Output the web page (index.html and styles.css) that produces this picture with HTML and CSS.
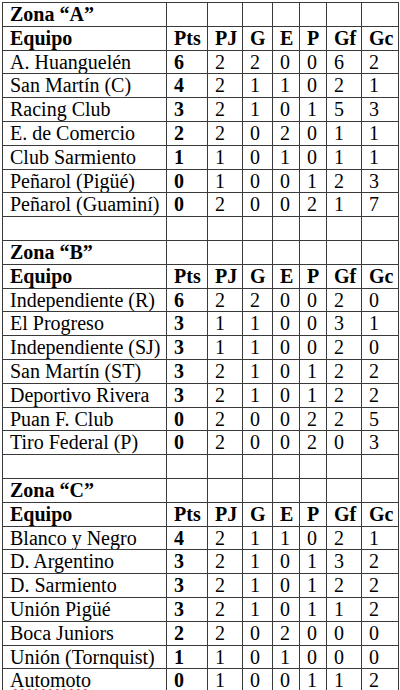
FILE: index.html
```html
<!DOCTYPE html>
<html lang="es">
<head>
<meta charset="utf-8">
<title>Zonas</title>
<link rel="stylesheet" href="styles.css">
</head>
<body>
<table class="tabla">
<colgroup>
<col class="c-eq"><col class="c-pts"><col class="c-pj"><col class="c-g"><col class="c-e"><col class="c-p"><col class="c-gf"><col class="c-gc">
</colgroup>
<tbody>
<tr class="zona"><td>Zona “A”</td><td></td><td></td><td></td><td></td><td></td><td></td><td></td></tr>
<tr class="head"><td>Equipo</td><td>Pts</td><td>PJ</td><td>G</td><td>E</td><td>P</td><td>Gf</td><td>Gc</td></tr>
<tr><td>A. Huanguelén</td><td class="b">6</td><td>2</td><td>2</td><td>0</td><td>0</td><td>6</td><td>2</td></tr>
<tr><td>San Martín (C)</td><td class="b">4</td><td>2</td><td>1</td><td>1</td><td>0</td><td>2</td><td>1</td></tr>
<tr><td>Racing Club</td><td class="b">3</td><td>2</td><td>1</td><td>0</td><td>1</td><td>5</td><td>3</td></tr>
<tr><td>E. de Comercio</td><td class="b">2</td><td>2</td><td>0</td><td>2</td><td>0</td><td>1</td><td>1</td></tr>
<tr><td>Club Sarmiento</td><td class="b">1</td><td>1</td><td>0</td><td>1</td><td>0</td><td>1</td><td>1</td></tr>
<tr><td>Peñarol (Pigüé)</td><td class="b">0</td><td>1</td><td>0</td><td>0</td><td>1</td><td>2</td><td>3</td></tr>
<tr><td>Peñarol (Guaminí)</td><td class="b">0</td><td>2</td><td>0</td><td>0</td><td>2</td><td>1</td><td>7</td></tr>
<tr class="blank"><td></td><td></td><td></td><td></td><td></td><td></td><td></td><td></td></tr>
<tr class="zona"><td>Zona “B”</td><td></td><td></td><td></td><td></td><td></td><td></td><td></td></tr>
<tr class="head"><td>Equipo</td><td>Pts</td><td>PJ</td><td>G</td><td>E</td><td>P</td><td>Gf</td><td>Gc</td></tr>
<tr><td>Independiente (R)</td><td class="b">6</td><td>2</td><td>2</td><td>0</td><td>0</td><td>2</td><td>0</td></tr>
<tr><td>El Progreso</td><td class="b">3</td><td>1</td><td>1</td><td>0</td><td>0</td><td>3</td><td>1</td></tr>
<tr><td>Independiente (SJ)</td><td class="b">3</td><td>1</td><td>1</td><td>0</td><td>0</td><td>2</td><td>0</td></tr>
<tr><td>San Martín (ST)</td><td class="b">3</td><td>2</td><td>1</td><td>0</td><td>1</td><td>2</td><td>2</td></tr>
<tr><td>Deportivo Rivera</td><td class="b">3</td><td>2</td><td>1</td><td>0</td><td>1</td><td>2</td><td>2</td></tr>
<tr><td>Puan F. Club</td><td class="b">0</td><td>2</td><td>0</td><td>0</td><td>2</td><td>2</td><td>5</td></tr>
<tr><td>Tiro Federal (P)</td><td class="b">0</td><td>2</td><td>0</td><td>0</td><td>2</td><td>0</td><td>3</td></tr>
<tr class="blank"><td></td><td></td><td></td><td></td><td></td><td></td><td></td><td></td></tr>
<tr class="zona"><td>Zona “C”</td><td></td><td></td><td></td><td></td><td></td><td></td><td></td></tr>
<tr class="head"><td>Equipo</td><td>Pts</td><td>PJ</td><td>G</td><td>E</td><td>P</td><td>Gf</td><td>Gc</td></tr>
<tr><td>Blanco y Negro</td><td class="b">4</td><td>2</td><td>1</td><td>1</td><td>0</td><td>2</td><td>1</td></tr>
<tr><td>D. Argentino</td><td class="b">3</td><td>2</td><td>1</td><td>0</td><td>1</td><td>3</td><td>2</td></tr>
<tr><td>D. Sarmiento</td><td class="b">3</td><td>2</td><td>1</td><td>0</td><td>1</td><td>2</td><td>2</td></tr>
<tr><td>Unión Pigüé</td><td class="b">3</td><td>2</td><td>1</td><td>0</td><td>1</td><td>1</td><td>2</td></tr>
<tr><td>Boca Juniors</td><td class="b">2</td><td>2</td><td>0</td><td>2</td><td>0</td><td>0</td><td>0</td></tr>
<tr><td>Unión (Tornquist)</td><td class="b">1</td><td>1</td><td>0</td><td>1</td><td>0</td><td>0</td><td>0</td></tr>
<tr><td><span class="spell">Automoto</span></td><td class="b">0</td><td>1</td><td>0</td><td>0</td><td>1</td><td>1</td><td>2</td></tr>
</tbody>
</table>
</body>
</html>
```
FILE: styles.css
```css
html, body {
  margin: 0;
  padding: 0;
  background: #ffffff;
}
body {
  padding: 2px 0 0 2px;
  color: #000000;
}
.tabla {
  border-collapse: collapse;
  table-layout: fixed;
  width: 396px;
  font-family: "Liberation Serif", Tinos, "Times New Roman", Times, serif;
  font-size: 20px;
  line-height: 22.8px;
}
.c-eq { width: 164px; }
.c-pts { width: 41px; }
.c-pj { width: 35px; }
.c-g { width: 30px; }
.c-e { width: 27px; }
.c-p { width: 27px; }
.c-gf { width: 35px; }
.c-gc { width: 37px; }
.tabla td {
  border: 1px solid #3a3a3a;
  padding: 0 0 0 7px;
  height: 22.8px;
  white-space: nowrap;
  overflow: hidden;
  vertical-align: bottom;
}
.zona td, .head td, .b {
  font-weight: bold;
}
.spell {
  text-decoration: underline wavy #e23b3b;
  text-decoration-thickness: 1px;
  text-underline-offset: 1px;
}
```
